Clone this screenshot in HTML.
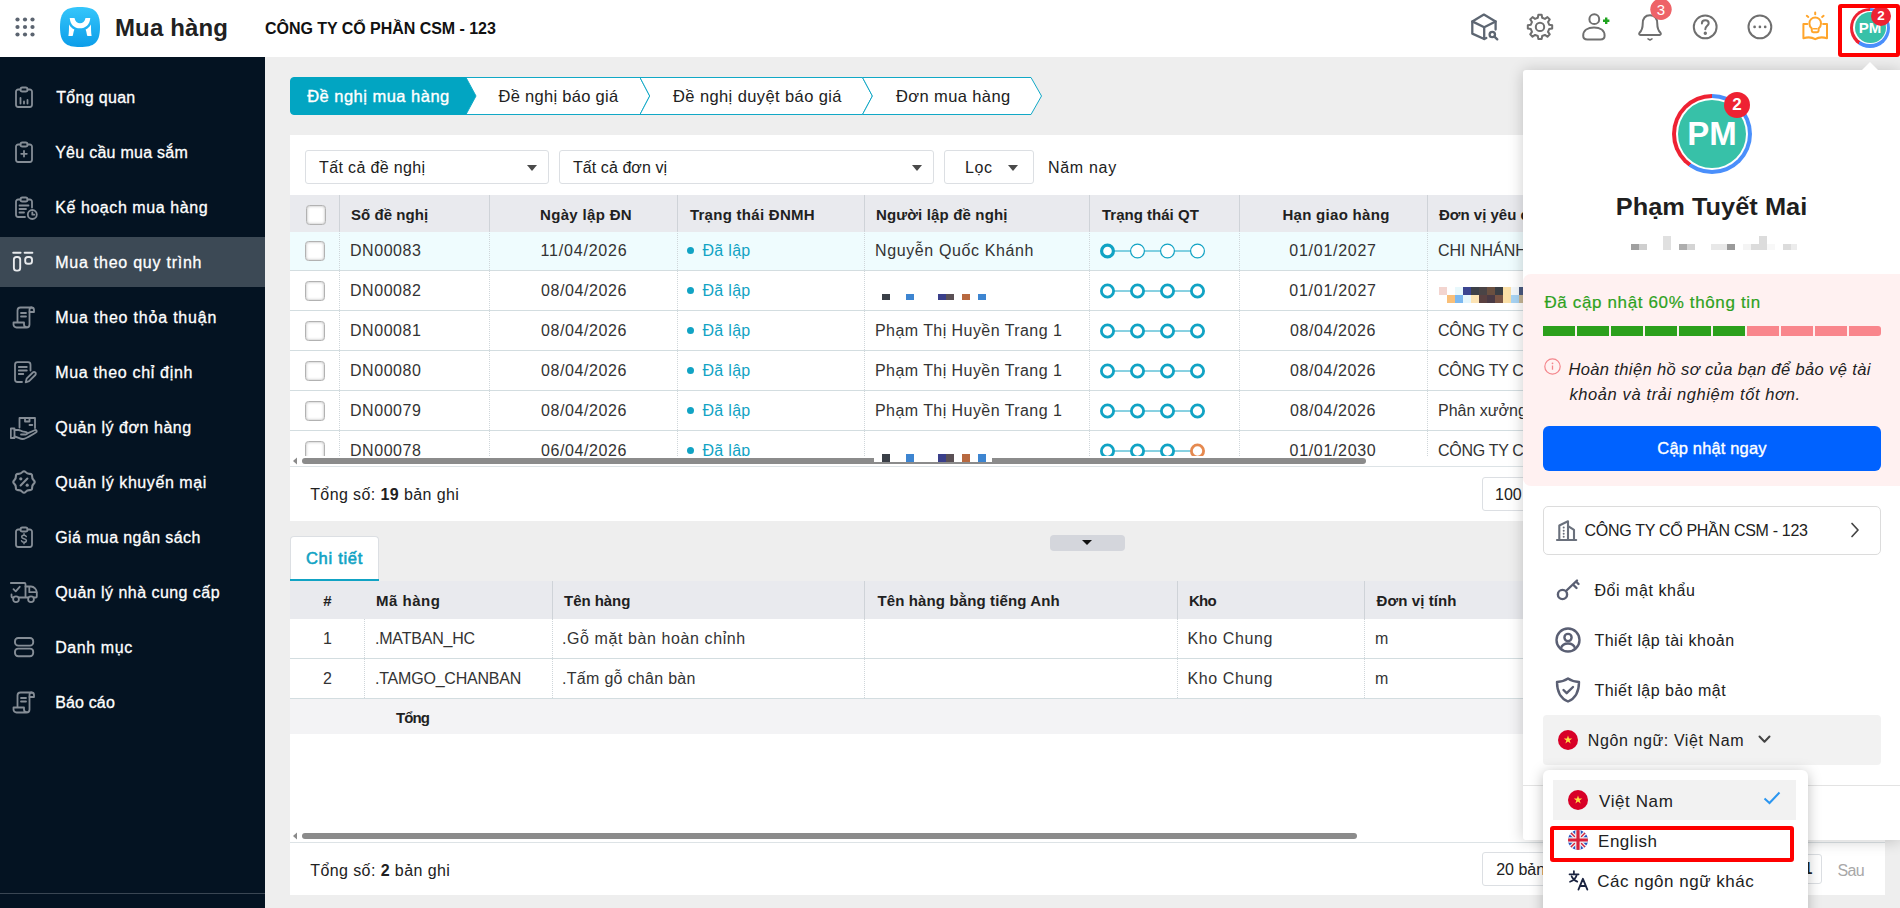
<!DOCTYPE html>
<html lang="vi"><head>
<meta charset="utf-8">
<title>Mua hàng</title>
<style>
*{box-sizing:border-box;margin:0;padding:0}
html,body{width:1900px;height:908px;overflow:hidden}
body{position:relative;background:#eeeeee;font-family:"Liberation Sans",sans-serif;font-size:16px;color:#212121}
.abs{position:absolute}
.t{position:absolute;white-space:nowrap;line-height:20px}
.md{-webkit-text-stroke:0.35px currentColor}
.sb{font-weight:bold}
/* header */
#hdr{position:absolute;left:0;top:0;width:1900px;height:57px;background:#fff}
/* sidebar */
#side{position:absolute;left:0;top:57px;width:265px;height:851px;background:#041322}
.mi{position:absolute;left:0;width:265px;height:50px}
.mi.act{background:#3c4955}
.mi .lbl{position:absolute;left:55px;top:16px;line-height:20px;color:#fff;font-size:16px;white-space:nowrap;-webkit-text-stroke:0.3px #fff}
.mi svg{position:absolute;left:10px;top:11px;width:28px;height:28px;fill:none;stroke:#858d96;stroke-width:1.8;stroke-linecap:round;stroke-linejoin:round}

/* main */
#main{position:absolute;left:265px;top:57px;width:1635px;height:851px;overflow:hidden}
.card{position:absolute;background:#fff}
.sel{position:absolute;height:34px;border:1px solid #dcdfe3;border-radius:3px;background:#fff}
.sel .tx{position:absolute;left:13px;top:7px;line-height:20px;font-size:16px;white-space:nowrap;color:#212121}
.caret{position:absolute;width:0;height:0;border-left:5px solid transparent;border-right:5px solid transparent;border-top:6px solid #4a4a4a}
.gh{position:absolute;background:#e9eaee}
.th{position:absolute;top:0;height:100%;font-weight:bold;font-size:15px;color:#212121;white-space:nowrap;line-height:20px;padding-top:10px}
.vsep{position:absolute;top:0;width:1px;height:100%;background:#cfd3d8}
.row{position:absolute;left:0;width:100%;height:40px;border-bottom:1px solid #d3dde0;background:#fff}
.row.hl{background:#effcfe}
.row .c{position:absolute;top:10px;line-height:20px;font-size:16px;white-space:nowrap;color:#333}
.row .dsep{position:absolute;top:0;width:0;height:100%;border-left:1px dotted #cfd6da}
.cb{position:absolute;width:20px;height:20px;border:1.500px solid #b2b2b2;border-radius:3.500px;background:#fff;box-shadow:inset 0 0 3px rgba(0,0,0,.3)}
.st{color:#11a3c4 !important}
.st i{display:inline-block;width:7px;height:7px;border-radius:50%;background:#11a3c4;margin-right:8.5px;vertical-align:middle;position:relative;top:-1px}

/* panel */
#panel{position:absolute;left:1523px;top:70px;width:377px;height:770px;background:#fff;box-shadow:0 1px 15px rgba(0,0,0,.2);border-radius:3px 0 0 3px}
.pm{position:absolute;left:20px;width:337px;height:50px}
.pm .tx{position:absolute;left:50px;top:16px;line-height:20px;font-size:16px;white-space:nowrap;color:#212121}
.pm svg{position:absolute;left:10.800px;top:11px}
#dd{position:absolute;left:1543px;top:770px;width:265px;height:160px;background:#fff;border-radius:6px;box-shadow:0 2px 14px rgba(0,0,0,.25)}
</style>
</head>
<body>
<!-- HEADER -->
<div id="hdr">
  <svg class="abs" style="left:15px;top:17px" width="20" height="20" viewBox="0 0 20 20" fill="#5b6470">
    <circle cx="2.5" cy="2.5" r="2.1"></circle><circle cx="10" cy="2.5" r="2.1"></circle><circle cx="17.5" cy="2.5" r="2.1"></circle>
    <circle cx="2.5" cy="10" r="2.1"></circle><circle cx="10" cy="10" r="2.1"></circle><circle cx="17.5" cy="10" r="2.1"></circle>
    <circle cx="2.5" cy="17.5" r="2.1"></circle><circle cx="10" cy="17.5" r="2.1"></circle><circle cx="17.5" cy="17.5" r="2.1"></circle>
  </svg>
  <svg class="abs" style="left:60px;top:7px" width="40" height="40" viewBox="0 0 40 40">
    <defs><linearGradient id="lg" x1="0" y1="0" x2="0" y2="1"><stop offset="0" stop-color="#35c6fb"></stop><stop offset="1" stop-color="#0c9de9"></stop></linearGradient></defs>
    <path d="M20 0 C34 0 40 4 40 20 C40 36 34 40 20 40 C6 40 0 36 0 20 C0 4 6 0 20 0Z" fill="url(#lg)"></path>
    <path d="M9.700 10.900H14.500C15 14.500 17.500 16.300 20 16.300C22.500 16.300 25 14.500 25.500 10.900H30.300C29.800 17.500 25.500 21.300 20 21.300C14.500 21.300 10.200 17.500 9.700 10.900Z" fill="#fff"></path><path d="M9 17.400C10.500 19.900 12.200 21.400 14.400 22.400C13.300 24.500 13.500 27 12.600 29.100H8.400C9 25 9 21 9 17.400Z" fill="#fff"></path><path d="M31 17.400C29.500 19.900 27.800 21.400 25.600 22.400C26.700 24.500 26.500 27 27.400 29.100H31.600C31 25 31 21 31 17.400Z" fill="#fff"></path>
  </svg>
  <div class="t sb" id="apptitle" style="left: 115px; top: 13px; font-size: 24px; line-height: 30px; color: rgb(33, 33, 33); letter-spacing: 0.13px;">Mua hàng</div>
  <div class="t sb" id="company" style="left: 265px; top: 19px; font-size: 16px; line-height: 20px; color: rgb(17, 17, 17); letter-spacing: -0.04px;">CÔNG TY CỔ PHẦN CSM - 123</div>

  <svg class="abs" style="left:1460px;top:0" width="380" height="57" viewBox="1460 0 380 57" fill="none" stroke-linecap="round" stroke-linejoin="round">
    <!-- cube search -->
    <g stroke="#5d6672" stroke-width="2.300">
      <path d="M1495.600 29.500V21.400L1483.900 14.600L1472.300 21.400V33.600L1484.200 39L1486.300 38"></path>
      <path d="M1472.300 21.400L1484.200 27.300L1495.600 21.400M1484.200 27.300V39"></path>
      <circle cx="1492.300" cy="34.500" r="2.700"></circle><path d="M1494.400 36.600L1497.300 39.400"></path>
    </g>
    <!-- gear -->
    <g stroke="#6f6f6f" stroke-width="2">
      <path d="M1537.81 17.76 L1538.36 14.71 L1541.64 14.71 L1542.19 17.76 L1544.91 18.89 L1547.46 17.12 L1549.78 19.44 L1548.01 21.99 L1549.14 24.71 L1552.19 25.26 L1552.19 28.54 L1549.14 29.09 L1548.01 31.81 L1549.78 34.36 L1547.46 36.68 L1544.91 34.91 L1542.19 36.04 L1541.64 39.09 L1538.36 39.09 L1537.81 36.04 L1535.09 34.91 L1532.54 36.68 L1530.22 34.36 L1531.99 31.81 L1530.86 29.09 L1527.81 28.54 L1527.81 25.26 L1530.86 24.71 L1531.99 21.99 L1530.22 19.44 L1532.54 17.12 L1535.09 18.89Z"></path><circle cx="1540" cy="26.900" r="4.200"></circle>
    </g>
    <!-- user plus -->
    <g stroke="#6f6f6f" stroke-width="2">
      <circle cx="1594.300" cy="19.200" r="4.900"></circle>
      <path d="M1583.200 35.800C1583.200 30.300 1588 27.600 1594 27.600C1600 27.600 1604.600 30.300 1604.600 35.800C1604.600 38.300 1603 39.500 1600.500 39.500H1587.300C1584.800 39.500 1583.200 38.300 1583.200 35.800Z"></path>
      <path d="M1606.200 17.600V24M1603 20.800H1609.400" stroke="#1fa31f" stroke-width="2.400" stroke-linecap="butt"></path>
    </g>
    <!-- bell -->
    <g stroke="#6f6f6f" stroke-width="2">
      <path d="M1650 15.300C1644.700 15.300 1642.700 19.500 1642.700 24C1642.700 29 1641 31.300 1639.500 32.800C1638.800 33.700 1639.200 35 1640.400 35H1659.600C1660.800 35 1661.200 33.700 1660.500 32.800C1659 31.300 1657.300 29 1657.300 24C1657.300 19.500 1655.300 15.300 1650 15.300Z"></path>
      <path d="M1648 38.800L1650 40L1652 38.800" stroke-width="1.500"></path>
    </g>
    <circle cx="1661" cy="9.300" r="10.700" fill="#ee6368"></circle>
    <!-- help -->
    <g stroke="#6f6f6f" stroke-width="2">
      <circle cx="1705.200" cy="26.900" r="11.400"></circle>
      <path d="M1701.900 23.400C1701.900 21.500 1703.300 20.200 1705.300 20.200C1707.300 20.200 1708.700 21.500 1708.700 23.300C1708.700 25.800 1705.300 26 1705.300 29.300"></path>
      <circle cx="1705.300" cy="33.200" r=".7" fill="#6f6f6f"></circle>
      <circle cx="1759.900" cy="26.900" r="11.400"></circle>
    </g>
    <g fill="#6f6f6f"><circle cx="1754.600" cy="26.900" r="1.350"></circle><circle cx="1759.900" cy="26.900" r="1.350"></circle><circle cx="1765.200" cy="26.900" r="1.350"></circle></g>
    <!-- bulb/book -->
    <g stroke="#ffa52b" stroke-width="2">
      <path d="M1807.300 23.900H1803.400V38.300C1808 36.800 1812 37.200 1815.200 39.200C1818.400 37.200 1822.400 36.800 1827 38.300V23.900H1823.100"></path>
      <path d="M1811.800 28.500C1810.300 27.200 1809.400 25.400 1809.400 23.400C1809.400 20 1812 17.400 1815.200 17.400C1818.400 17.400 1821 20 1821 23.400C1821 25.400 1820.100 27.200 1818.600 28.500V30.800C1818.600 31.600 1818 32.200 1817.200 32.200H1813.200C1812.400 32.200 1811.800 31.600 1811.800 30.800Z"></path>
      <path d="M1813.500 28.800H1816.900" stroke-width="1.600"></path>
      <path d="M1815.200 12.500V14.300M1806.800 15.800L1808.300 17M1823.600 15.800L1822.100 17"></path>
    </g>
  </svg>
  <div class="t sb" style="left:1651px;top:0;width:20px;text-align:center;color:#fff;font-size:15px;line-height:19px;font-weight:normal">3</div>
  <!-- avatar small -->
  <div class="abs" style="left:1850px;top:7.500px;width:40px;height:40px;border-radius:50%;background:conic-gradient(#4a8ffb 0 216deg,#ee2233 216deg 360deg)"></div>
  <div class="abs" style="left:1853.400px;top:10.900px;width:33.200px;height:33.200px;border-radius:50%;background:#fff"></div>
  <div class="abs" style="left:1854.500px;top:12px;width:31px;height:31px;border-radius:50%;background:#37c1a8"></div>
  <div class="t sb" style="left:1854.500px;top:18px;width:31px;text-align:center;color:#fff;font-size:15px;line-height:20px">PM</div>
  <div class="abs" style="left:1871px;top:5.500px;width:20px;height:20px;border-radius:50%;background:#ee2233;color:#fff;font-weight:bold;font-size:13.500px;line-height:20px;text-align:center">2</div>
  <div class="abs" style="left:1837.500px;top:4px;width:62px;height:52.500px;border:4px solid #ff0000;border-radius:3px"></div>
</div>

<!-- SIDEBAR -->
<div id="side">
  <div class="mi" style="top:15px"><svg viewBox="0 0 28 28"><path d="M10.500 6.500H8.200a2.200 2.200 0 0 0-2.200 2.200v13.100a2.200 2.200 0 0 0 2.200 2.200h11.600a2.200 2.200 0 0 0 2.200-2.200V8.700a2.200 2.200 0 0 0-2.200-2.200H17.500"></path><rect x="10.500" y="4.500" width="7" height="4" rx="1.800"></rect><path d="M10.500 20.500v-5.500M14 20.500v-2M17.500 20.500v-3.500"></path></svg><span class="lbl" style="left: 56.2px; letter-spacing: 0.32px;">Tổng quan</span></div>
  <div class="mi" style="top:70px"><svg viewBox="0 0 28 28"><path d="M10.500 6.500H8.200a2.200 2.200 0 0 0-2.200 2.200v13.100a2.200 2.200 0 0 0 2.200 2.200h11.600a2.200 2.200 0 0 0 2.200-2.200V8.700a2.200 2.200 0 0 0-2.200-2.200H17.500"></path><rect x="10.500" y="4.500" width="7" height="4" rx="1.800"></rect><path d="M14 13v5.500M11.200 15.800h5.600"></path></svg><span class="lbl" style="left: 55.2px; letter-spacing: 0.26px;">Yêu cầu mua sắm</span></div>
  <div class="mi" style="top:125px"><svg viewBox="0 0 28 28"><path d="M10.500 6.500H8.200a2.200 2.200 0 0 0-2.200 2.200v13.100a2.200 2.200 0 0 0 2.200 2.200H15"></path><path d="M17.500 6.500h2.300a2.200 2.200 0 0 1 2.200 2.200V14.500"></path><rect x="10.500" y="4.500" width="7" height="4" rx="1.800"></rect><path d="M9.500 12.500h9M9.500 16h6.500M9.500 19.500h4.500"></path><circle cx="22.300" cy="21.500" r="4.500"></circle><path d="M22.300 19.300v2.400h2"></path></svg><span class="lbl" style="left: 55.2px; letter-spacing: 0.57px;">Kế hoạch mua hàng</span></div>
  <div class="mi act" style="top:180px"><svg viewBox="0 0 28 28"><g stroke="#e8eaed" stroke-width="1.900"><path d="M3.200 4.800h7.400M14.600 4.800h7.800"></path><rect x="3.900" y="9" width="6.300" height="13.600" rx="2.600"></rect><rect x="15.200" y="9" width="6.800" height="6.800" rx="2.600"></rect></g></svg><span class="lbl" style="left: 55.2px; letter-spacing: 0.76px;">Mua theo quy trình</span></div>
  <div class="mi" style="top:235px"><svg viewBox="0 0 28 28"><path d="M7.500 19.500V7.500a3 3 0 0 1 3-3H21.500a2.500 2.500 0 0 1 2.500 2.500V9H19.500V21.500a3 3 0 0 1-3 3H6.500a3 3 0 0 1-3-3V19.500H14V21.500a2.700 2.700 0 0 0 2.700 2.700"></path><path d="M19.500 9V6.800a2.300 2.300 0 0 1 2.200-2.300"></path><path d="M11 10h5M11 13.500h5"></path></svg><span class="lbl" style="left: 55.2px; letter-spacing: 0.8px;">Mua theo thỏa thuận</span></div>
  <div class="mi" style="top:290px"><svg viewBox="0 0 28 28"><path d="M20.500 12.500V6.700a2.500 2.500 0 0 0-2.500-2.500H7.500a2.500 2.500 0 0 0-2.500 2.500V21.500a2.500 2.500 0 0 0 2.500 2.500H12"></path><path d="M8.800 9h8M8.800 12.500h8M8.800 16h4.500"></path><path d="M15.700 24.300l.9-3.600 6.200-6.200a1.700 1.700 0 0 1 2.500 2.500l-6.200 6.200z"></path></svg><span class="lbl" style="left: 55.2px; letter-spacing: 0.68px;">Mua theo chỉ định</span></div>
  <div class="mi" style="top:345px"><svg viewBox="0 0 28 28"><path d="M9.500 14.500V5H25V15"></path><path d="M15 5v3.500h4.500V5"></path><path d="M19.500 12h2.800"></path><path d="M.8 15.500H4.500V25H.8z"></path><path d="M4.500 17h4c1.500 0 2.600 1 4 1.400l3.700.8c1.500.4 1.300 2.300-.3 2.300H11"></path><path d="M4.500 23.500c3 .3 5.500 2.500 8 2.500 3.500 0 8.500-3.800 13.300-6.500 1.700-1 .6-3-1.200-2.300L17.500 20.400"></path></svg><span class="lbl" style="left: 55.2px; letter-spacing: 0.54px;">Quản lý đơn hàng</span></div>
  <div class="mi" style="top:400px"><svg viewBox="0 0 28 28"><path d="M12.35 4.18 Q14.00 2.30 15.65 4.18 Q17.29 6.05 19.78 5.89 Q22.27 5.73 22.11 8.22 Q21.95 10.71 23.82 12.35 Q25.70 14.00 23.82 15.65 Q21.95 17.29 22.11 19.78 Q22.27 22.27 19.78 22.11 Q17.29 21.95 15.65 23.82 Q14.00 25.70 12.35 23.82 Q10.71 21.95 8.22 22.11 Q5.73 22.27 5.89 19.78 Q6.05 17.29 4.18 15.65 Q2.30 14.00 4.18 12.35 Q6.05 10.71 5.89 8.22 Q5.73 5.73 8.22 5.89 Q10.71 6.05 12.35 4.18Z" stroke-width="2.1"></path><path d="M10.6 17.4l6.8-6.8" stroke-width="2.1"></path><circle cx="10.8" cy="10.8" r="1.6" fill="#858d96" stroke="none"></circle><circle cx="17.2" cy="17.2" r="1.6" fill="#858d96" stroke="none"></circle></svg><span class="lbl" style="left: 55.2px; letter-spacing: 0.57px;">Quản lý khuyến mại</span></div>
  <div class="mi" style="top:455px"><svg viewBox="0 0 28 28"><path d="M10.500 6.500H8.200a2.200 2.200 0 0 0-2.200 2.200v13.100a2.200 2.200 0 0 0 2.200 2.200h11.600a2.200 2.200 0 0 0 2.200-2.200V8.700a2.200 2.200 0 0 0-2.200-2.200H17.500"></path><rect x="10.500" y="4.500" width="7" height="4" rx="1.800"></rect><path d="M16.300 13.600c-.4-.9-1.200-1.400-2.300-1.400-1.400 0-2.300.7-2.300 1.700 0 2.300 4.700 1.200 4.700 3.600 0 1.100-1 1.800-2.400 1.800-1.200 0-2.100-.5-2.500-1.500M14 10.700v1.500M14 19.300v1.500" stroke-width="1.500"></path></svg><span class="lbl" style="left: 55.2px; letter-spacing: 0.4px;">Giá mua ngân sách</span></div>
  <div class="mi" style="top:510px"><svg viewBox="0 0 28 28"><path d="M.8 5h13.700a1 1 0 0 1 1 1V19.500M9 19.500h9M1.500 16.500v2a1 1 0 0 0 1 1h.7"></path><path d="M15.500 8.500h5.500c3 0 5.800 3 5.800 6.500v3.500a1 1 0 0 1-1 1h-1.800"></path><path d="M19.300 8.800v5.400h7.300"></path><circle cx="6" cy="21.200" r="2.900"></circle><circle cx="21" cy="21.200" r="2.900"></circle><path d="M3.500 11.200l2.200 2.200 4-4.600"></path></svg><span class="lbl" style="left: 55.2px; letter-spacing: 0.46px;">Quản lý nhà cung cấp</span></div>
  <div class="mi" style="top:565px"><svg viewBox="0 0 28 28"><rect x="5" y="5" width="18.200" height="7.600" rx="3.200" stroke-width="1.900"></rect><rect x="5" y="15.600" width="18.200" height="7.600" rx="3.200" stroke-width="1.900"></rect></svg><span class="lbl" style="left: 55.2px; letter-spacing: 0.59px;">Danh mục</span></div>
  <div class="mi" style="top:620px"><svg viewBox="0 0 28 28"><path d="M7.500 19.500V7.500a3 3 0 0 1 3-3H21.500a2.500 2.500 0 0 1 2.500 2.500V9H19.500V21.500a3 3 0 0 1-3 3H6.500a3 3 0 0 1-3-3V19.500H14V21.500a2.700 2.700 0 0 0 2.700 2.700"></path><path d="M19.500 9V6.800a2.300 2.300 0 0 1 2.200-2.300"></path><path d="M11 10h5M11 13.500h5"></path></svg><span class="lbl" style="left: 55.2px; letter-spacing: 0.15px;">Báo cáo</span></div>
  <div class="abs" style="left:0;top:836px;width:265px;height:1px;background:#3a4653"></div>
</div>

<!-- MAIN -->
<div id="main">
<svg class="abs" style="left:25px;top:20px" width="760" height="38" viewBox="0 0 760 38">
  <path d="M4 0.5 H176 L186 19 L176 37.5 H4 Q0.5 37.5 0.5 34 V4 Q0.5 0.5 4 0.5Z" fill="#02a5c2" stroke="#02a5c2"></path>
  <path d="M176 0.5 H350 L359.7 19 L350 37.5 H176 L186 19Z" fill="#fff" stroke="#11a8c6" stroke-width="1"></path>
  <path d="M350 0.5 H572.5 L582.4 19 L572.5 37.5 H350 L359.7 19Z" fill="#fff" stroke="#11a8c6" stroke-width="1"></path>
  <path d="M572.5 0.5 H741 L751.5 19 L741 37.5 H572.5 L582.4 19Z" fill="#fff" stroke="#11a8c6" stroke-width="1"></path>
</svg>
<div class="t md" id="s1" style="left: 42.2px; top: 29px; color: rgb(255, 255, 255); font-size: 16.5px; letter-spacing: 0.48px;">Đề nghị mua hàng</div>
<div class="t" id="s2" style="left: 233.6px; top: 29px; font-size: 16.5px; letter-spacing: 0.28px;">Đề nghị báo giá</div>
<div class="t" id="s3" style="left: 408px; top: 29px; font-size: 16.5px; letter-spacing: 0.4px;">Đề nghị duyệt báo giá</div>
<div class="t" id="s4" style="left: 631px; top: 29px; font-size: 16.5px; letter-spacing: 0.39px;">Đơn mua hàng</div>

<div class="card" id="card1" style="left:25px;top:78px;width:1595px;height:386px">
  <div class="sel" style="left:15px;top:15px;width:244px"><span class="tx" style="left: 13.1px; letter-spacing: 0.36px;">Tất cả đề nghị</span><i class="caret" style="right:11px;top:14px"></i></div>
  <div class="sel" style="left:269px;top:15px;width:375px"><span class="tx" style="left: 13px; letter-spacing: 0.07px;">Tất cả đơn vị</span><i class="caret" style="right:11px;top:14px"></i></div>
  <div class="sel" style="left:654px;top:15px;width:90px"><span class="tx" style="left: 20px; letter-spacing: 0.6px;">Lọc</span><i class="caret" style="right:15.5px;top:14px"></i></div>
  <div class="t" style="left: 758px; top: 23px; letter-spacing: 0.69px;">Năm nay</div>
  <div class="gh" style="left:0;top:60px;width:1595px;height:37px"><div class="cb" style="left:16px;top:10px"></div><div class="vsep" style="left:49px"></div><div class="vsep" style="left:199px"></div><div class="vsep" style="left:387px"></div><div class="vsep" style="left:574px"></div><div class="vsep" style="left:799px"></div><div class="vsep" style="left:949px"></div><div class="vsep" style="left:1137px"></div><div class="th" style="left: 61px; letter-spacing: 0.05px;">Số đề nghị</div><div class="th" style="left: 200px; width: 188px; text-align: center; padding-left: 4px; letter-spacing: 0.34px;">Ngày lập ĐN</div><div class="th" style="left: 399.9px; letter-spacing: 0.28px;">Trạng thái ĐNMH</div><div class="th" style="left: 586px; letter-spacing: 0.15px;">Người lập đề nghị</div><div class="th" style="left: 812px; letter-spacing: 0.01px;">Trạng thái QT</div><div class="th" style="left: 949px; width: 188px; text-align: center; padding-left: 6px; letter-spacing: 0.3px;">Hạn giao hàng</div><div class="th" style="left: 1149px;">Đơn vị yêu cầu</div></div><div class="abs" style="left:0;top:97px;width:1595px;height:224px;overflow:hidden"><div class="row hl" style="top:-1px"><div class="cb" style="left:15px;top:10px"></div><div class="dsep" style="left:49px"></div><div class="dsep" style="left:199px"></div><div class="dsep" style="left:387px"></div><div class="dsep" style="left:574px"></div><div class="dsep" style="left:799px"></div><div class="dsep" style="left:949px"></div><div class="dsep" style="left:1137px"></div><div class="c dn" style="left: 60px; letter-spacing: 0.54px;">DN00083</div><div class="c dt" style="left: 200px; width: 188px; text-align: center; letter-spacing: 0.8px;">11/04/2026</div><div class="c st" style="left: 397px; letter-spacing: 0.3px;"><i></i>Đã lập</div><div class="c nm" style="left: 585px; letter-spacing: 0.62px;">Nguyễn Quốc Khánh</div><svg class="abs" style="left:800px;top:9.500px" width="130" height="20" viewBox="0 0 130 20"><path d="M24 10H41M54 10H71M84 10H101" stroke="#11a3c4" stroke-width="1"></path><circle cx="17.5" cy="10" r="5.9" fill="#fff" stroke="#11a3c4" stroke-width="3.2"></circle><circle cx="47.5" cy="10" r="6.9" fill="#fff" stroke="#11a3c4" stroke-width="1.2"></circle><circle cx="77.5" cy="10" r="6.9" fill="#fff" stroke="#11a3c4" stroke-width="1.2"></circle><circle cx="107.5" cy="10" r="6.9" fill="#fff" stroke="#11a3c4" stroke-width="1.2"></circle></svg><div class="c dt" style="left: 949px; width: 188px; text-align: center; letter-spacing: 0.72px;">01/01/2027</div><div class="c un" style="left:1148px">CHI NHÁNH HÀ NỘI</div></div><div class="row" style="top:39px"><div class="cb" style="left:15px;top:10px"></div><div class="dsep" style="left:49px"></div><div class="dsep" style="left:199px"></div><div class="dsep" style="left:387px"></div><div class="dsep" style="left:574px"></div><div class="dsep" style="left:799px"></div><div class="dsep" style="left:949px"></div><div class="dsep" style="left:1137px"></div><div class="c dn" style="left: 60px; letter-spacing: 0.54px;">DN00082</div><div class="c dt" style="left: 200px; width: 188px; text-align: center; letter-spacing: 0.6px;">08/04/2026</div><div class="c st" style="left: 397px; letter-spacing: 0.3px;"><i></i>Đã lập</div><svg class="abs" style="left:584px;top:23px" width="120" height="10" viewBox="0 0 120 10" shape-rendering="crispEdges"><rect x="8" y="0" width="8" height="6" fill="#3a3f47"></rect><rect x="32" y="0" width="8" height="6" fill="#3d85d1"></rect><rect x="64" y="0" width="8" height="6" fill="#3a3f8a"></rect><rect x="72" y="0" width="8" height="6" fill="#5a5055"></rect><rect x="88" y="0" width="8" height="6" fill="#b8693f"></rect><rect x="104" y="0" width="8" height="6" fill="#3d85d1"></rect></svg><svg class="abs" style="left:800px;top:9.500px" width="130" height="20" viewBox="0 0 130 20"><path d="M24 10H41M54 10H71M84 10H101" stroke="#11a3c4" stroke-width="1"></path><circle cx="17.5" cy="10" r="6.1" fill="#fff" stroke="#11a3c4" stroke-width="2.8"></circle><circle cx="47.5" cy="10" r="6.1" fill="#fff" stroke="#11a3c4" stroke-width="2.8"></circle><circle cx="77.5" cy="10" r="6.1" fill="#fff" stroke="#11a3c4" stroke-width="2.8"></circle><circle cx="107.5" cy="10" r="6.1" fill="#fff" stroke="#11a3c4" stroke-width="2.8"></circle></svg><div class="c dt" style="left: 949px; width: 188px; text-align: center; letter-spacing: 0.72px;">01/01/2027</div><svg class="abs" style="left:1148.750px;top:16px" width="88" height="16" viewBox="0 0 88 16" shape-rendering="crispEdges"><rect x="0" y="0" width="8" height="8" fill="#f3d5d0"></rect><rect x="8" y="0" width="8" height="8" fill="#ffffff"></rect><rect x="16" y="0" width="8" height="8" fill="#e8f8fc"></rect><rect x="24" y="0" width="8" height="8" fill="#3b4490"></rect><rect x="32" y="0" width="8" height="8" fill="#3d4048"></rect><rect x="40" y="0" width="8" height="8" fill="#4a4446"></rect><rect x="48" y="0" width="8" height="8" fill="#6b5040"></rect><rect x="56" y="0" width="8" height="8" fill="#3a3e44"></rect><rect x="64" y="0" width="8" height="8" fill="#fbe0a8"></rect><rect x="72" y="0" width="8" height="8" fill="#f4f8fb"></rect><rect x="80" y="0" width="8" height="8" fill="#4a5a80"></rect><rect x="0" y="8" width="8" height="8" fill="#ffffff"></rect><rect x="8" y="8" width="8" height="8" fill="#f9bf78"></rect><rect x="16" y="8" width="8" height="8" fill="#7bb8f0"></rect><rect x="24" y="8" width="8" height="8" fill="#e6f6fc"></rect><rect x="32" y="8" width="8" height="8" fill="#fce3b4"></rect><rect x="40" y="8" width="8" height="8" fill="#5a4040"></rect><rect x="48" y="8" width="8" height="8" fill="#4a3a44"></rect><rect x="56" y="8" width="8" height="8" fill="#7a5545"></rect><rect x="64" y="8" width="8" height="8" fill="#fbe0a8"></rect><rect x="72" y="8" width="8" height="8" fill="#a8d4f4"></rect><rect x="80" y="8" width="8" height="8" fill="#c8b898"></rect></svg></div><div class="row" style="top:79px"><div class="cb" style="left:15px;top:10px"></div><div class="dsep" style="left:49px"></div><div class="dsep" style="left:199px"></div><div class="dsep" style="left:387px"></div><div class="dsep" style="left:574px"></div><div class="dsep" style="left:799px"></div><div class="dsep" style="left:949px"></div><div class="dsep" style="left:1137px"></div><div class="c dn" style="left: 60px; letter-spacing: 0.54px;">DN00081</div><div class="c dt" style="left: 200px; width: 188px; text-align: center; letter-spacing: 0.6px;">08/04/2026</div><div class="c st" style="left: 397px; letter-spacing: 0.3px;"><i></i>Đã lập</div><div class="c nm" style="left: 585px; letter-spacing: 0.44px;">Phạm Thị Huyền Trang 1</div><svg class="abs" style="left:800px;top:9.500px" width="130" height="20" viewBox="0 0 130 20"><path d="M24 10H41M54 10H71M84 10H101" stroke="#11a3c4" stroke-width="1"></path><circle cx="17.5" cy="10" r="6.1" fill="#fff" stroke="#11a3c4" stroke-width="2.8"></circle><circle cx="47.5" cy="10" r="6.1" fill="#fff" stroke="#11a3c4" stroke-width="2.8"></circle><circle cx="77.5" cy="10" r="6.1" fill="#fff" stroke="#11a3c4" stroke-width="2.8"></circle><circle cx="107.5" cy="10" r="6.1" fill="#fff" stroke="#11a3c4" stroke-width="2.8"></circle></svg><div class="c dt" style="left: 949px; width: 188px; text-align: center; letter-spacing: 0.6px;">08/04/2026</div><div class="c un" style="left:1148px;letter-spacing:-0.3px">CÔNG TY CỔ PHẦN CSM - 123</div></div><div class="row" style="top:119px"><div class="cb" style="left:15px;top:10px"></div><div class="dsep" style="left:49px"></div><div class="dsep" style="left:199px"></div><div class="dsep" style="left:387px"></div><div class="dsep" style="left:574px"></div><div class="dsep" style="left:799px"></div><div class="dsep" style="left:949px"></div><div class="dsep" style="left:1137px"></div><div class="c dn" style="left: 60px; letter-spacing: 0.54px;">DN00080</div><div class="c dt" style="left: 200px; width: 188px; text-align: center; letter-spacing: 0.6px;">08/04/2026</div><div class="c st" style="left: 397px; letter-spacing: 0.3px;"><i></i>Đã lập</div><div class="c nm" style="left: 585px; letter-spacing: 0.44px;">Phạm Thị Huyền Trang 1</div><svg class="abs" style="left:800px;top:9.500px" width="130" height="20" viewBox="0 0 130 20"><path d="M24 10H41M54 10H71M84 10H101" stroke="#11a3c4" stroke-width="1"></path><circle cx="17.5" cy="10" r="6.1" fill="#fff" stroke="#11a3c4" stroke-width="2.8"></circle><circle cx="47.5" cy="10" r="6.1" fill="#fff" stroke="#11a3c4" stroke-width="2.8"></circle><circle cx="77.5" cy="10" r="6.1" fill="#fff" stroke="#11a3c4" stroke-width="2.8"></circle><circle cx="107.5" cy="10" r="6.1" fill="#fff" stroke="#11a3c4" stroke-width="2.8"></circle></svg><div class="c dt" style="left: 949px; width: 188px; text-align: center; letter-spacing: 0.6px;">08/04/2026</div><div class="c un" style="left:1148px;letter-spacing:-0.3px">CÔNG TY CỔ PHẦN CSM - 123</div></div><div class="row" style="top:159px"><div class="cb" style="left:15px;top:10px"></div><div class="dsep" style="left:49px"></div><div class="dsep" style="left:199px"></div><div class="dsep" style="left:387px"></div><div class="dsep" style="left:574px"></div><div class="dsep" style="left:799px"></div><div class="dsep" style="left:949px"></div><div class="dsep" style="left:1137px"></div><div class="c dn" style="left: 60px; letter-spacing: 0.54px;">DN00079</div><div class="c dt" style="left: 200px; width: 188px; text-align: center; letter-spacing: 0.6px;">08/04/2026</div><div class="c st" style="left: 397px; letter-spacing: 0.3px;"><i></i>Đã lập</div><div class="c nm" style="left: 585px; letter-spacing: 0.44px;">Phạm Thị Huyền Trang 1</div><svg class="abs" style="left:800px;top:9.500px" width="130" height="20" viewBox="0 0 130 20"><path d="M24 10H41M54 10H71M84 10H101" stroke="#11a3c4" stroke-width="1"></path><circle cx="17.5" cy="10" r="6.1" fill="#fff" stroke="#11a3c4" stroke-width="2.8"></circle><circle cx="47.5" cy="10" r="6.1" fill="#fff" stroke="#11a3c4" stroke-width="2.8"></circle><circle cx="77.5" cy="10" r="6.1" fill="#fff" stroke="#11a3c4" stroke-width="2.8"></circle><circle cx="107.5" cy="10" r="6.1" fill="#fff" stroke="#11a3c4" stroke-width="2.8"></circle></svg><div class="c dt" style="left: 949px; width: 188px; text-align: center; letter-spacing: 0.6px;">08/04/2026</div><div class="c un" style="left:1148px">Phân xưởng 1</div></div><div class="row" style="top:199px"><div class="cb" style="left:15px;top:10px"></div><div class="dsep" style="left:49px"></div><div class="dsep" style="left:199px"></div><div class="dsep" style="left:387px"></div><div class="dsep" style="left:574px"></div><div class="dsep" style="left:799px"></div><div class="dsep" style="left:949px"></div><div class="dsep" style="left:1137px"></div><div class="c dn" style="left: 60px; letter-spacing: 0.54px;">DN00078</div><div class="c dt" style="left: 200px; width: 188px; text-align: center; letter-spacing: 0.6px;">06/04/2026</div><div class="c st" style="left: 397px; letter-spacing: 0.3px;"><i></i>Đã lập</div><svg class="abs" style="left:584px;top:23px" width="120" height="10" viewBox="0 0 120 10" shape-rendering="crispEdges"><rect x="8" y="0" width="8" height="6" fill="#3a3f47"></rect><rect x="32" y="0" width="8" height="6" fill="#3d85d1"></rect><rect x="64" y="0" width="8" height="6" fill="#3a3f8a"></rect><rect x="72" y="0" width="8" height="6" fill="#5a5055"></rect><rect x="88" y="0" width="8" height="6" fill="#b8693f"></rect><rect x="104" y="0" width="8" height="6" fill="#3d85d1"></rect></svg><svg class="abs" style="left:800px;top:9.500px" width="130" height="20" viewBox="0 0 130 20"><path d="M24 10H41M54 10H71M84 10H101" stroke="#11a3c4" stroke-width="1"></path><circle cx="17.5" cy="10" r="6.1" fill="#fff" stroke="#11a3c4" stroke-width="2.8"></circle><circle cx="47.5" cy="10" r="6.1" fill="#fff" stroke="#11a3c4" stroke-width="2.8"></circle><circle cx="77.5" cy="10" r="6.1" fill="#fff" stroke="#11a3c4" stroke-width="2.8"></circle><circle cx="107.5" cy="10" r="6.1" fill="#fff" stroke="#e6894f" stroke-width="2.8"></circle></svg><div class="c dt" style="left: 949px; width: 188px; text-align: center; letter-spacing: 0.68px;">01/01/2030</div><div class="c un" style="left:1148px;letter-spacing:-0.3px">CÔNG TY CỔ PHẦN CSM - 123</div></div></div>
  <!-- scrollbar -->
  <div class="abs" style="left:0;top:323px;width:1595px;height:9px;background:#fff"></div>
  <svg class="abs" style="left:2px;top:322px" width="6" height="8" viewBox="0 0 6 8"><path d="M5 0.5 L1 4 L5 7.5Z" fill="#8a8a8a"></path></svg>
  <div class="abs" style="left:12px;top:323px;width:1064px;height:6px;border-radius:3px;background:#8b8b8b"></div>
  <div class="abs" style="left:0;top:331px;width:1595px;height:1px;background:#dde3e6"></div>
  <!-- redaction overlay on scrollbar -->
  <div class="abs" style="left:584px;top:318px;width:118px;height:9px;background:#fff"></div>
  <svg class="abs" style="left:584px;top:319px" width="120" height="10" viewBox="0 0 120 10" shape-rendering="crispEdges"><rect x="8" y="0" width="8" height="8" fill="#3a3f47"></rect><rect x="32" y="0" width="8" height="8" fill="#3d85d1"></rect><rect x="64" y="0" width="8" height="8" fill="#3a3f8a"></rect><rect x="72" y="0" width="8" height="8" fill="#5a5055"></rect><rect x="88" y="0" width="8" height="8" fill="#b8693f"></rect><rect x="104" y="0" width="8" height="8" fill="#3d85d1"></rect></svg>
  <div class="t" id="tot1" style="left: 20.2px; top: 350px; letter-spacing: 0.4px;">Tổng số: <b>19</b> bản ghi</div>
  <div class="sel" style="left:1192px;top:342px;width:150px;height:34px"><span class="tx" style="left: 12px;">100</span></div>
</div>

<div class="abs" style="left:785px;top:478px;width:75px;height:16px;border-radius:4px;background:#d4d6dc"></div>
<div class="caret" style="left:817px;top:483px;border-top-color:#111;border-left-width:5px;border-right-width:5px;border-top-width:5px"></div>
<div class="abs" style="left:25px;top:479px;width:89px;height:45px;border:1px solid #dcdfe3;border-bottom:0;border-radius:4px 4px 0 0;background:#fff"></div>
<div class="t md" id="tabtx" style="left: 41px; top: 491px; color: rgb(17, 163, 196); font-size: 16.5px; letter-spacing: 0.7px;;-webkit-text-stroke:0.6px #11a3c4">Chi tiết</div>
<div class="card" id="card2" style="left:25px;top:524px;width:1595px;height:314px">
  <div class="gh" style="left:0;top:0;width:1595px;height:39px"><div class="vsep" style="left:262px"></div><div class="vsep" style="left:574px"></div><div class="vsep" style="left:887px"></div><div class="vsep" style="left:1074px"></div><div class="th" style="left:0;width:75px;text-align:center;padding-top:10px">#</div><div class="th" style="left: 86px; padding-top: 10px; letter-spacing: 0.51px;">Mã hàng</div><div class="th" style="left: 274.1px; padding-top: 10px; letter-spacing: -0.06px;">Tên hàng</div><div class="th" style="left: 587.4px; padding-top: 10px; letter-spacing: 0.13px;">Tên hàng bằng tiếng Anh</div><div class="th" style="left: 899px; padding-top: 10px; letter-spacing: -0.81px;">Kho</div><div class="th" style="left: 1086.6px; padding-top: 10px; letter-spacing: 0.09px;">Đơn vị tính</div></div><div class="row" style="top:38px"><div class="dsep" style="left:74px"></div><div class="dsep" style="left:262px"></div><div class="dsep" style="left:574px"></div><div class="dsep" style="left:887px"></div><div class="dsep" style="left:1074px"></div><div class="c" style="left:0;width:75px;text-align:center;top:10px">1</div><div class="c" style="left: 85px; top: 10px; letter-spacing: -0.2px;">.MATBAN_HC</div><div class="c" style="left: 272px; top: 10px; letter-spacing: 0.59px;">.Gỗ mặt bàn hoàn chỉnh</div><div class="c" style="left: 897.6px; top: 10px; letter-spacing: 0.59px;">Kho Chung</div><div class="c" style="left: 1085px; top: 10px;">m</div></div><div class="row" style="top:78px"><div class="dsep" style="left:74px"></div><div class="dsep" style="left:262px"></div><div class="dsep" style="left:574px"></div><div class="dsep" style="left:887px"></div><div class="dsep" style="left:1074px"></div><div class="c" style="left:0;width:75px;text-align:center;top:10px">2</div><div class="c" style="left: 85px; top: 10px; letter-spacing: -0.21px;">.TAMGO_CHANBAN</div><div class="c" style="left: 272px; top: 10px; letter-spacing: 0.3px;">.Tấm gỗ chân bàn</div><div class="c" style="left: 897.6px; top: 10px; letter-spacing: 0.59px;">Kho Chung</div><div class="c" style="left: 1085px; top: 10px;">m</div></div><div class="abs" style="left:0;top:118px;width:1595px;height:35px;background:#f3f3f5"></div><div class="t sb" style="left: 106px; top: 126.5px; font-size: 15px; letter-spacing: -0.9px;">Tổng</div>
  <svg class="abs" style="left:2px;top:251px" width="6" height="8" viewBox="0 0 6 8"><path d="M5 0.5 L1 4 L5 7.5Z" fill="#8a8a8a"></path></svg>
  <div class="abs" style="left:12px;top:252px;width:1055px;height:6px;border-radius:3px;background:#8b8b8b"></div>
  <div class="abs" style="left:0;top:261px;width:1595px;height:1px;background:#dde3e6"></div>
  <div class="t" id="tot2" style="left: 20.2px; top: 280px; letter-spacing: 0.42px;">Tổng số: <b>2</b> bản ghi</div>
  <div class="sel" style="left:1192px;top:271px;width:150px;height:34px"><span class="tx" style="left: 13.2px;">20 bản ghi trên 1 trang</span></div>
  <div class="sel" style="left:1504px;top:273px;width:28px;height:30px"><span class="tx sb" style="left:0;width:26px;text-align:center;top:4px">1</span></div>
  <div class="t" id="sau" style="left: 1547.4px; top: 280px; color: rgb(168, 168, 168); letter-spacing: -0.63px;">Sau</div>
</div>
<div class="abs" style="left:25px;top:522px;width:89px;height:2px;background:#11a3c4"></div>
<!--MAIN_MORE--></div>

<!-- PANEL -->

<div class="abs" style="left:1862px;top:62px;width:0;height:0;border-left:8.5px solid transparent;border-right:8.5px solid transparent;border-bottom:8px solid #fff;z-index:3"></div>
<div id="panel">
  <!-- avatar -->
  <div class="abs" style="left:149px;top:24px;width:80px;height:80px;border-radius:50%;background:conic-gradient(#4a8ffb 0 216deg,#ee2233 216deg 360deg)"></div>
  <div class="abs" style="left:153px;top:28px;width:72px;height:72px;border-radius:50%;background:#fff"></div>
  <div class="abs" style="left:154.800px;top:29.800px;width:68.400px;height:68.400px;border-radius:50%;background:#37c1a8"></div>
  <div class="t sb" style="left:155px;top:45px;width:68px;text-align:center;color:#fff;font-size:33px;line-height:38px">PM</div>
  <div class="abs" style="left:201px;top:22px;width:26px;height:26px;border-radius:50%;background:#ee2233;color:#fff;font-weight:bold;font-size:17px;line-height:26px;text-align:center">2</div>
  <div class="t sb" id="pname" style="left:0;top:122px;width:377px;text-align:center;font-size:24px;line-height:30px;color:#1f1f1f;transform:scaleX(1.058);transform-origin:50% 50%">Phạm Tuyết Mai</div>
  <!-- blurred email -->
  <svg class="abs" style="left:100px;top:162px" width="190" height="20" viewBox="1623 232 190 20" shape-rendering="crispEdges">
<rect x="1631" y="244" width="8" height="6" fill="#a0a0a0"></rect><rect x="1639" y="244" width="8" height="6" fill="#cfcfcf"></rect>
<rect x="1663" y="236" width="8" height="14" fill="#e0e0e0"></rect>
<rect x="1679" y="244" width="8" height="6" fill="#adadad"></rect><rect x="1687" y="244" width="8" height="6" fill="#d4d4d4"></rect>
<rect x="1711" y="244" width="16" height="6" fill="#e8e8e8"></rect><rect x="1727" y="244" width="8" height="6" fill="#9a9a9a"></rect>
<rect x="1743" y="244" width="8" height="6" fill="#f4f4f4"></rect><rect x="1751" y="244" width="8" height="6" fill="#dcdcdc"></rect><rect x="1759" y="236" width="8" height="14" fill="#dcdcdc"></rect><rect x="1767" y="244" width="8" height="6" fill="#f8f8f8"></rect>
<rect x="1783" y="244" width="8" height="6" fill="#dcdcdc"></rect><rect x="1791" y="244" width="6" height="6" fill="#ececec"></rect>
</svg>
  <!-- pink block -->
  <div class="abs" style="left:0;top:204px;width:377px;height:212px;background:#fff1f1;border-radius:8px 0 0 8px"></div>
  <div class="t" id="upd" style="left: 21.4px; top: 223px; color: rgb(46, 161, 33); font-size: 17px; -webkit-text-stroke: 0.2px rgb(46, 161, 33); letter-spacing: 0.64px;">Đã cập nhật 60% thông tin</div>
  <div class="abs" style="left:20px;top:256px;width:32px;height:10px;background:#2ca01c;"></div><div class="abs" style="left:54px;top:256px;width:32px;height:10px;background:#2ca01c;"></div><div class="abs" style="left:88px;top:256px;width:32px;height:10px;background:#2ca01c;"></div><div class="abs" style="left:122px;top:256px;width:32px;height:10px;background:#2ca01c;"></div><div class="abs" style="left:156px;top:256px;width:32px;height:10px;background:#2ca01c;"></div><div class="abs" style="left:190px;top:256px;width:32px;height:10px;background:#2ca01c;"></div><div class="abs" style="left:224px;top:256px;width:32px;height:10px;background:#f9868c;"></div><div class="abs" style="left:258px;top:256px;width:32px;height:10px;background:#f9868c;"></div><div class="abs" style="left:292px;top:256px;width:32px;height:10px;background:#f9868c;"></div><div class="abs" style="left:326px;top:256px;width:32px;height:10px;background:#f9868c;border-radius:0 3px 3px 0;"></div>
  <svg class="abs" style="left:21px;top:288px" width="17" height="17" viewBox="0 0 17 17"><circle cx="8.5" cy="8.5" r="7.7" fill="none" stroke="#f4868c" stroke-width="1.2"></circle><path d="M8.5 7.5v4.2" stroke="#f4868c" stroke-width="1.3"></path><circle cx="8.5" cy="5.3" r=".9" fill="#f4868c"></circle></svg>
  <div class="t" id="it1" style="left: 45.4px; top: 288.5px; font-style: italic; font-size: 16.5px; color: rgb(33, 33, 33); letter-spacing: 0.38px;">Hoàn thiện hồ sơ của bạn để bảo vệ tài</div>
  <div class="t" id="it2" style="left: 46.4px; top: 313.5px; font-style: italic; font-size: 16.5px; color: rgb(33, 33, 33); letter-spacing: 0.61px;">khoản và trải nghiệm tốt hơn.</div>
  <div class="abs" style="left:20px;top:356px;width:338px;height:45px;border-radius:6px;background:#0062ff"></div>
  <div class="t md" id="btn" style="left: 20px; top: 368px; width: 338px; text-align: center; color: rgb(255, 255, 255); font-size: 16.5px; letter-spacing: 0.15px;">Cập nhật ngay</div>
  <!-- company box -->
  <div class="abs" style="left:20px;top:436px;width:338px;height:49px;border:1px solid #dcdcdc;border-radius:5px"></div>
  <svg class="abs" style="left:32px;top:449px" width="24" height="24" viewBox="1555 519 24 24" fill="none" stroke="#6a707c" stroke-width="2.100" stroke-linejoin="round" stroke-linecap="round"><path d="M1557 540H1576.200"></path><path d="M1559.300 539V525.500L1568 521.300V539"></path><path d="M1568.500 526.300L1574 529.900V539"></path><g fill="#6a707c" stroke="none"><circle cx="1563.700" cy="527.500" r="1"></circle><circle cx="1563.700" cy="530.700" r="1"></circle><circle cx="1563.700" cy="533.800" r="1"></circle><circle cx="1563.700" cy="536.800" r="1"></circle></g></svg>
  <div class="t" id="pco" style="left: 61.6px; top: 451px; font-size: 16px; letter-spacing: -0.3px;">CÔNG TY CỔ PHẦN CSM - 123</div>
  <svg class="abs" style="left:327px;top:452px" width="10" height="16" viewBox="0 0 10 16"><path d="M2 1.500L8 8L2 14.500" fill="none" stroke="#444" stroke-width="1.700" stroke-linecap="round" stroke-linejoin="round"></path></svg>
  <!-- menu -->
  <div class="pm" style="top:495px"><span class="tx" style="left: 51.4px; letter-spacing: 0.57px;">Đổi mật khẩu</span>
    <svg width="28" height="28" viewBox="0 0 28 28" fill="none" stroke="#5a5f73" stroke-width="2.400" stroke-linecap="round" stroke-linejoin="round"><circle cx="8.500" cy="18.500" r="4.600"></circle><path d="M12 15L23 4.500M19 8.500L22.500 12M22 5.500L24.500 8"></path></svg></div>
  <div class="pm" style="top:545px"><span class="tx" style="left: 51.4px; letter-spacing: 0.5px;">Thiết lập tài khoản</span>
    <svg width="28" height="28" viewBox="0 0 28 28" fill="none" stroke="#5a5f73" stroke-width="2.400" stroke-linecap="round" stroke-linejoin="round"><circle cx="14" cy="14" r="11.500"></circle><circle cx="14" cy="11.500" r="3.600"></circle><path d="M6.800 22.500C8 18.800 11 17.500 14 17.500S20 18.800 21.200 22.500"></path></svg></div>
  <div class="pm" style="top:595px"><span class="tx" style="left: 51.4px; letter-spacing: 0.48px;">Thiết lập bảo mật</span>
    <svg width="28" height="28" viewBox="0 0 28 28" fill="none" stroke="#5a5f73" stroke-width="2.400" stroke-linecap="round" stroke-linejoin="round"><path d="M14 2.500C17.500 5 21 5.800 25 6C25 15 22.500 22 14 25.500C5.500 22 3 15 3 6C7 5.800 10.500 5 14 2.500Z"></path><path d="M9.500 14l3.200 3.200L19 11"></path></svg></div>
  <!-- language -->
  <div class="abs" style="left:20px;top:645px;width:338px;height:50px;border-radius:4px;background:#f2f2f2"></div>
  <div class="abs" style="left:35px;top:660px;width:20px;height:20px"><svg width="20" height="20" viewBox="0 0 20 20"><circle cx="10" cy="10" r="10" fill="#d80027"></circle><path d="M10 5.600l1.050 3h3.150l-2.550 1.850 1 3L10 11.600 7.350 13.450l1-3L5.800 8.600h3.150z" fill="#ffda44"></path></svg></div>
  <div class="t" id="lang" style="left: 64.8px; top: 661px; letter-spacing: 0.6px;">Ngôn ngữ: Việt Nam</div>
  <svg class="abs" style="left:235px;top:665px" width="13" height="9" viewBox="0 0 13 9"><path d="M1.500 1.500L6.500 6.800L11.500 1.500" fill="none" stroke="#444" stroke-width="2" stroke-linecap="round" stroke-linejoin="round"></path></svg>
  <div class="abs" style="left:0;top:715px;width:377px;height:1px;background:#e3e3e3"></div>
</div>
<!-- dropdown -->
<div id="dd">
  <div class="abs" style="left:10px;top:10px;width:243px;height:40px;background:#f2f2f2"></div>
  <div class="abs" style="left:25px;top:20px;width:20px;height:20px"><svg width="20" height="20" viewBox="0 0 20 20"><circle cx="10" cy="10" r="10" fill="#d80027"></circle><path d="M10 5.600l1.050 3h3.150l-2.550 1.850 1 3L10 11.600 7.350 13.450l1-3L5.800 8.600h3.150z" fill="#ffda44"></path></svg></div>
  <div class="t" id="vn" style="left: 56px; top: 21.5px; font-size: 17px; letter-spacing: 0.6px;">Việt Nam</div>
  <svg class="abs" style="left:220px;top:21px" width="18" height="14" viewBox="0 0 18 14"><path d="M1.500 7.500L6.500 12L16.500 1.500" fill="none" stroke="#2b96f0" stroke-width="2"></path></svg>
  <div class="abs" style="left:7.400px;top:56px;width:243.600px;height:35.500px;border:4px solid #ff0000;border-radius:3px"></div>
  <div class="abs" style="left:25px;top:60px;width:20px;height:20px"><svg width="20" height="20" viewBox="0 0 20 20"><defs><clipPath id="ukc"><circle cx="10" cy="10" r="10"></circle></clipPath></defs><g clip-path="url(#ukc)"><rect width="20" height="20" fill="#2452c0"></rect><path d="M0 0L20 20M20 0L0 20" stroke="#f0f0f0" stroke-width="4"></path><path d="M0 0L20 20M20 0L0 20" stroke="#d8203a" stroke-width="1.400"></path><path d="M10 0V20M0 10H20" stroke="#f0f0f0" stroke-width="5.600"></path><path d="M10 0V20M0 10H20" stroke="#d8203a" stroke-width="3.200"></path></g></svg></div>
  <div class="t" id="en" style="left: 55px; top: 61.5px; font-size: 17px; letter-spacing: 0.54px;">English</div>
  <svg class="abs" style="left:25px;top:100px" width="22" height="21" viewBox="0 0 22 21" fill="none" stroke="#1a2340" stroke-width="1.700" stroke-linecap="round" stroke-linejoin="round"><path d="M1.500 4.300H10.600M5.900 1V4.300M8.800 4.500C8.300 7.500 6 10.300 2 11.800M3.600 6.300C4.600 8.600 6.500 10.500 9.300 11.600"></path><path d="M10.500 19.500L14.900 8.800L19.300 19.500M12 16H17.800" stroke-width="1.900"></path></svg>
  <div class="t" id="other" style="left: 54.2px; top: 101.5px; font-size: 17px; letter-spacing: 0.51px;">Các ngôn ngữ khác</div>
</div>



</body></html>
